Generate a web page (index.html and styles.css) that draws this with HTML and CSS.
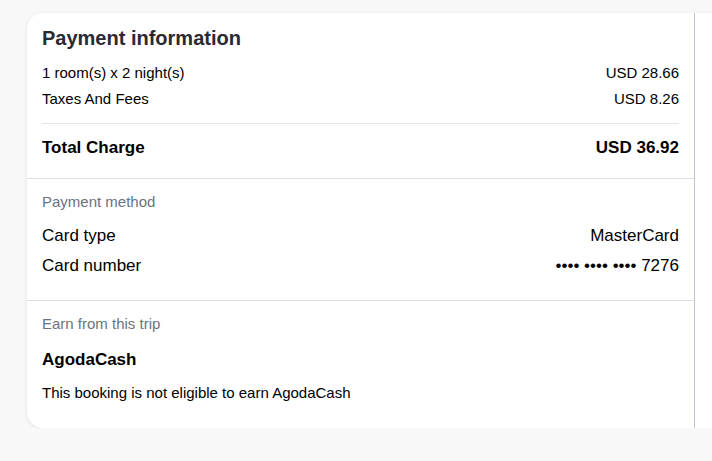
FILE: index.html
```html
<!DOCTYPE html>
<html lang="en">
<head>
<meta charset="utf-8">
<title>Payment information</title>
<link rel="stylesheet" href="styles.css">
</head>
<body>
<div class="page">
  <div class="card">
    <div class="main">
      <section class="section section-summary">
        <h2 class="title">Payment information</h2>
        <div class="row row-first"><span>1 room(s) x 2 night(s)</span><span>USD 28.66</span></div>
        <div class="row row-next"><span>Taxes And Fees</span><span>USD 8.26</span></div>
        <div class="total"><span>Total Charge</span><span>USD 36.92</span></div>
      </section>
      <section class="section section-method">
        <div class="label">Payment method</div>
        <div class="big-row big-first"><span>Card type</span><span>MasterCard</span></div>
        <div class="big-row big-next"><span>Card number</span><span>•••• •••• •••• 7276</span></div>
      </section>
      <section class="section section-earn">
        <div class="label">Earn from this trip</div>
        <div class="earn-title">AgodaCash</div>
        <div class="earn-text">This booking is not eligible to earn AgodaCash</div>
      </section>
    </div>
    <div class="side"></div>
  </div>
</div>
</body>
</html>
```
FILE: styles.css
```css
html, body {
  margin: 0;
  padding: 0;
  background: #f8f8f8;
}
body {
  font-family: "Liberation Sans", Arial, sans-serif;
  color: #000;
}
.page {
  padding: 13px 0 0 27px;
}
.card {
  display: flex;
  background: #fff;
  border-radius: 16px 0 0 16px;
  box-shadow: 0 1px 4px rgba(0, 0, 0, 0.09);
}
.main {
  width: 667px;
  border-right: 1px solid #bcc2c9;
}
.side {
  flex: 1;
}
.section {
  padding: 0 15px;
}
.section + .section {
  border-top: 1px solid #dddfe2;
}
.section-summary {
  padding-top: 13px;
  padding-bottom: 18px;
}
.title {
  margin: 0;
  font-size: 20px;
  line-height: 24px;
  font-weight: 700;
  color: #2a2a33;
}
.row {
  display: flex;
  justify-content: space-between;
  font-size: 15px;
  line-height: 20px;
}
.row-first { margin-top: 13px; }
.row-next { margin-top: 6px; }
.total {
  display: flex;
  justify-content: space-between;
  margin-top: 14px;
  padding-top: 12px;
  border-top: 1px solid #e3e5e8;
  font-size: 17px;
  line-height: 24px;
  font-weight: 700;
}
.section-method {
  padding-top: 13px;
  padding-bottom: 22px;
}
.label {
  font-size: 15px;
  line-height: 20px;
  color: #6b7280;
}
.big-row {
  display: flex;
  justify-content: space-between;
  font-size: 17px;
  line-height: 24px;
}
.big-first { margin-top: 12px; }
.big-next { margin-top: 6px; }
.section-earn {
  padding-top: 13px;
  padding-bottom: 25px;
}
.earn-title {
  margin-top: 14px;
  font-size: 17px;
  line-height: 24px;
  font-weight: 700;
}
.earn-text {
  margin-top: 11px;
  font-size: 15px;
  line-height: 20px;
}
```
